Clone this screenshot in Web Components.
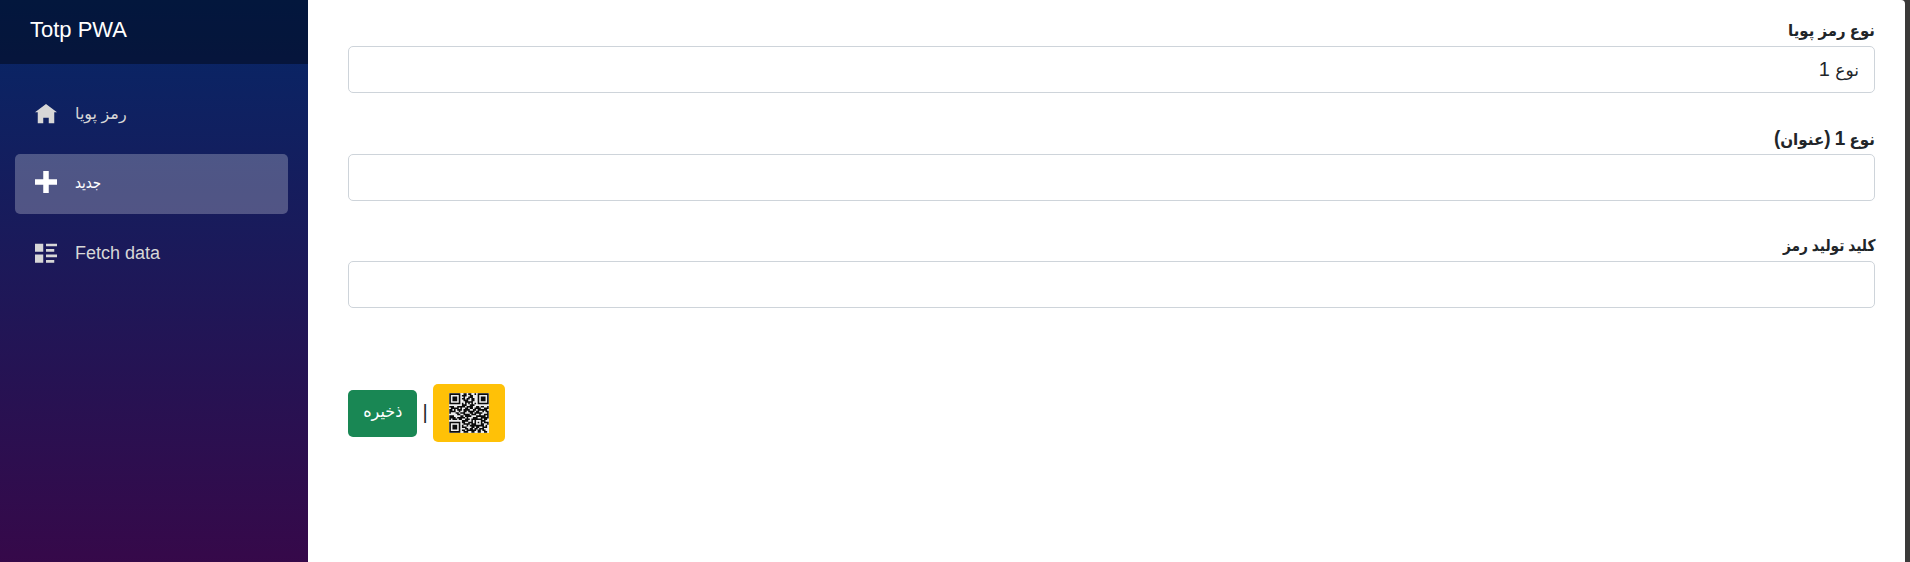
<!DOCTYPE html>
<html lang="fa">
<head>
<meta charset="utf-8">
<title>Totp PWA</title>
<style>
html,body{margin:0;height:100%;overflow:hidden;background:#3b3a39}
body{font:20px/30px "Liberation Sans","DejaVu Sans",sans-serif;color:#212529}
</style>
</head>
<body>
<totp-app></totp-app>
<script>
const define = (name, html, setup) => customElements.define(name, class extends HTMLElement {
  connectedCallback() {
    if (this.shadowRoot) return;
    const root = this.attachShadow({ mode: 'open' });
    root.innerHTML = html;
    if (setup) setup(this, root);
  }
});

const glyphs = {
  home: 'M4 0l-4 3h1v4h2v-2h2v2h2v-4.03l1 .03-4-3z',
  plus: 'M3 0v3h-3v2h3v3h2v-3h3v-2h-3v-3h-2z',
  list: 'M0 0v3h3v-3h-3zm4 0v1h4v-1h-4zm0 2v1h3v-1h-3zm-4 2v3h3v-3h-3zm4 0v1h4v-1h-4zm0 2v1h3v-1h-3z'
};

define('nav-item', `<style>
:host{display:flex;align-items:center;height:60px;box-sizing:border-box;border-radius:5px;padding-left:20px;color:#d7d7d7;line-height:60px}
:host([active]){background:rgba(255,255,255,.25);color:#fff}
svg{width:22px;height:22px;margin-right:18px;fill:currentColor;transform:translateY(var(--icon-y,0px))}
span{white-space:nowrap;font-size:var(--size,18px);transform-origin:left;transform:translateY(var(--text-y,0px)) scaleX(var(--sx,1))}
</style><svg viewBox="0 0 8 8"><path/></svg><span><slot></slot></span>`,
(el, root) => root.querySelector('path').setAttribute('d', glyphs[el.getAttribute('icon')]));

define('side-bar', `<style>
:host{display:block;width:308px;flex:none;height:562px;background:linear-gradient(180deg,rgb(5,39,103) 0,#3a0647 610px)}
header{height:64px;box-sizing:border-box;background:rgba(0,0,0,.4);color:#fff;font-size:22px;line-height:33px;padding:13px 0 0 30px}
nav{display:flex;flex-direction:column;gap:10px;padding:20px 20px 0 15px}
</style><header>Totp PWA</header><nav><slot></slot></nav>`);

define('form-field', `<style>
:host{display:block;height:107px;direction:rtl}
label{display:block;height:30px;font-weight:700;white-space:nowrap}
label span{display:inline-block;transform-origin:right;font-size:16px;line-height:28px;transform:translateY(var(--text-y,-2px)) scaleX(var(--sx,1))}
b{font-size:20px;line-height:1}
.box{height:47px;box-sizing:border-box;border:1px solid #ced4da;border-radius:5px;padding:7px 15px;background:#fff}
</style><label><span></span></label><div class="box"><slot></slot></div>`,
(el, root) => root.querySelector('span').innerHTML = el.getAttribute('label').replace(/[0-9()]/g, '<b>$&</b>'));

define('push-button', `<style>
:host{display:flex;align-items:center;justify-content:center;box-sizing:border-box;border-radius:5px;color:#fff;background:#198754;width:69px;height:47px}
:host([tone=warning]){background:#ffc107;width:72px;height:58px}
</style><slot></slot>`);

const qr = [
'1111111001101100101111111',
'1000001011100110001000001',
'1011101001001110001011101',
'1011101011011011001011101',
'1011101001110011001011101',
'1000001000111110001000001',
'1111111010101010101111111',
'0000000011100111000000000',
'1110011111011110011011001',
'0111110100110110111100111',
'1101011101111001101111110',
'1111001001101111011001011',
'1000110111000110111110001',
'0000011001111011100100111',
'1110000110111100011111101',
'1111011111010001110011111',
'1011101100111011111110110',
'0000000011110010100011100',
'1111111011001110101010111',
'1000001001111011100011001',
'1011101010010111111111010',
'1011101011100011011001110',
'1011101000110110110111000',
'1000001011011111101101100',
'1111111001110011001100110'];
define('qr-code', `<style>:host{display:block;width:40px;height:40px}svg{display:block;background:#eee}</style>
<svg width="40" height="40" viewBox="-.2 -.2 25.4 25.4"><path fill="#0b0b0b"/></svg>`,
(el, root) => {
  let d = '';
  qr.forEach((row, y) => {
    for (const m of row.matchAll(/1+/g)) d += `M${m.index} ${y}h${m[0].length}v1h-${m[0].length}z`;
  });
  root.querySelector('path').setAttribute('d', d);
});

define('totp-app', `<style>
:host{display:flex;width:1905px;height:562px}
main{flex:1;box-sizing:border-box;background:#fff;border-top-right-radius:4px;padding:16px 30px 0 40px}
form-field:first-child{height:108px}
.actions{display:flex;align-items:center;margin-top:46px;height:58px}
.sep{width:16px;text-align:center;line-height:26px;margin-top:-2px}
.ar{display:inline-block;font-size:17px}
</style>
<side-bar>
<nav-item icon="home" style="--size:16px;--icon-y:1px">رمز پویا</nav-item>
<nav-item icon="plus" active style="--size:16px;--sx:.84;--icon-y:-2px;--text-y:-1px">جدید</nav-item>
<nav-item icon="list" style="--icon-y:.5px;--text-y:-1px">Fetch data</nav-item>
</side-bar>
<main>
<form-field label="نوع رمز پویا" style="--sx:.935"><span class="ar">نوع</span> 1</form-field>
<form-field label="نوع 1 (عنوان)" style="--sx:.945;--text-y:-1px"></form-field>
<form-field label="کلید تولید رمز" style="--sx:.86"></form-field>
<div class="actions"><push-button><span class="ar" style="transform:translateY(-1px) scaleX(.94)">ذخیره</span></push-button><span class="sep">|</span><push-button tone="warning"><qr-code></qr-code></push-button></div>
</main>`);
</script>
</body>
</html>
